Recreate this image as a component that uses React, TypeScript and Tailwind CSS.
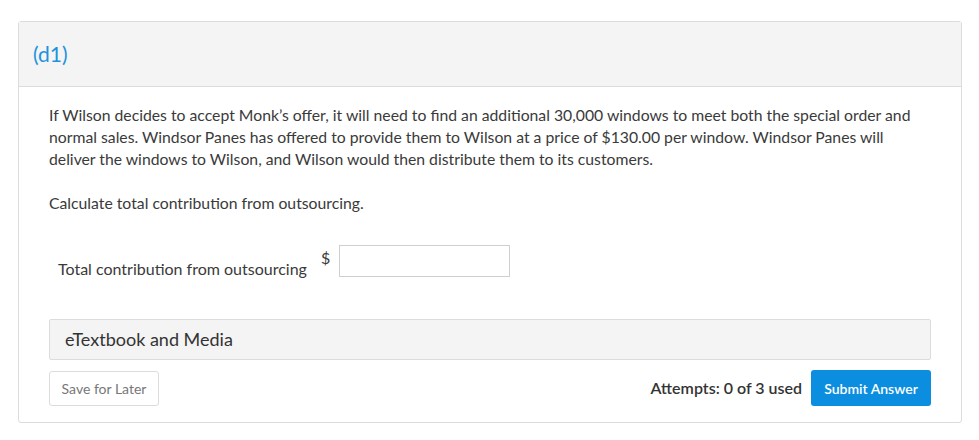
import React, { useState } from 'react';

export default function App() {
  const [value, setValue] = useState('');

  return (
    <div className="min-h-[440px] w-[979px] bg-white pt-[21px] font-['Lato','Liberation_Sans',sans-serif] text-[#333]">
      <div className="ml-[18px] w-[944px] rounded-[3px] border border-[#dcdcdc] bg-white">
        {/* Header */}
        <div className="flex h-[65px] items-center border-b border-[#dcdcdc] bg-[#f4f4f4] px-[14px]">
          <h2 className="text-[21px] text-[#1c93dc]">(d1)</h2>
        </div>

        {/* Body */}
        <div className="px-[30px] pt-[17px] pb-[16px]">
          <p className="text-[15.75px] leading-[22px] text-[#3a3a3a]">
            If Wilson decides to accept Monk’s offer, it will need to find an additional 30,000 windows to meet both the special order and normal sales. Windsor Panes has offered to provide them to Wilson at a price of $130.00 per window. Windsor Panes will deliver the windows to Wilson, and Wilson would then distribute them to its customers.
          </p>
          <p className="mt-[22px] text-[15.75px] leading-[22px] text-[#3a3a3a]">
            Calculate total contribution from outsourcing.
          </p>

          {/* Answer row */}
          <div className="mt-[31px] flex items-start pl-[9px]">
            <label className="mt-[13px] text-[16px] leading-[22px] text-[#3a3a3a]">
              Total contribution from outsourcing
            </label>
            <span className="ml-[14px] mt-[2px] text-[16px] leading-[22px] text-[#3a3a3a]">$</span>
            <input
              value={value}
              onChange={(e) => setValue(e.target.value)}
              className="ml-[9px] h-[32px] w-[171px] border border-[#cfcfcf] bg-white px-2 text-[15px] outline-none"
            />
          </div>

          {/* eTextbook */}
          <div className="mt-[39px] flex h-[41px] items-center rounded-[2px] border border-[#dcdcdc] bg-[#f4f4f4] px-[15px]">
            <span className="text-[18px] text-[#333]">eTextbook and Media</span>
          </div>

          {/* Actions */}
          <div className="mt-[10px] flex items-start justify-between">
            <button className="mt-[1px] h-[35px] w-[110px] rounded-[3px] border border-[#dcdcdc] bg-white text-[14px] text-[#777]">
              Save for Later
            </button>
            <div className="flex items-center">
              <span className="text-[16px] font-semibold text-[#333]">Attempts: 0 of 3 used</span>
              <button className="ml-[9px] h-[36px] w-[120px] rounded-[3px] bg-[#0b8de0] text-[14px] font-semibold text-white">
                Submit Answer
              </button>
            </div>
          </div>
        </div>
      </div>
    </div>
  );
}
